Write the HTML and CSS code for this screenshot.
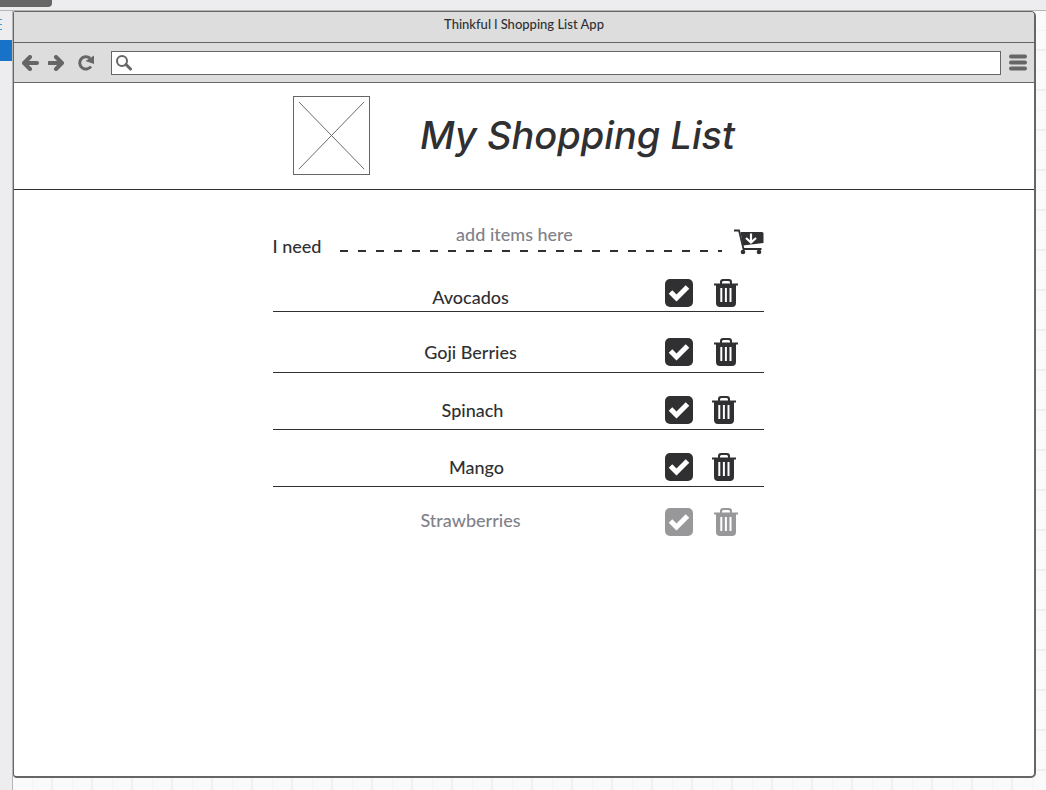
FILE: index.html
```html
<!DOCTYPE html>
<html lang="en">
<head>
<meta charset="utf-8">
<title>Thinkful | Shopping List App</title>
<link rel="stylesheet" href="styles.css">
</head>
<body>
<svg class="sprite" aria-hidden="true">
  <symbol id="check" viewBox="0 0 28 28"><rect width="28" height="28" rx="5" fill="currentColor"/><path d="M5.500 13l6 6L22.500 8" fill="none" stroke="#fff" stroke-width="5" stroke-linejoin="miter"/></symbol>
  <symbol id="trash" viewBox="0 0 24 28"><path fill="currentColor" fill-rule="evenodd" d="M0 4.500h6V3q0-3 3-3h6q3 0 3 3v1.500h6v2h-2V24q0 4-4 4H6q-4 0-4-4V6.500H0zM8 4.500h8V3.500q0-1.500-1.500-1.500h-5Q8 2 8 3.500zM6.300 9v14h2V9zM10.900 9v14h2V9zM15.500 9v14h2V9z"/></symbol>
</svg>
<div class="desk">
  <div class="desk-top"><span class="scroll-thumb"></span></div>
  <div class="desk-side"><span class="side-lines"></span><span class="side-active"></span></div>
  <div class="canvas">
    <div class="window">
      <div class="titlebar">Thinkful l Shopping List App</div>
      <div class="toolbar">
        <button class="nav-button" aria-label="Back"><svg width="18" height="16" viewBox="0 0 18 16"><path d="M15 8H3M8 2L2 8l6 6"/></svg></button>
        <button class="nav-button" aria-label="Forward"><svg width="18" height="16" viewBox="0 0 18 16"><path d="M1 8h12M8 2l6 6-6 6"/></svg></button>
        <button class="nav-button reload" aria-label="Reload"><svg width="18" height="16" viewBox="0 0 18 16"><path class="arc" d="M12 3.200A6.200 6.200 0 1 0 13 11.500"/><path class="tip" d="M16 .5v8.500L7.500 6z"/></svg></button>
        <label class="address">
          <svg width="18" height="16" viewBox="0 0 18 16"><circle cx="6" cy="6" r="5" fill="none" stroke="#666" stroke-width="2"/><path d="M10 9.500l4.500 4.500" stroke="#666" stroke-width="3" stroke-linecap="round"/></svg>
          <input type="text" aria-label="Address">
        </label>
        <button class="nav-button menu" aria-label="Menu"><svg width="18" height="17" viewBox="0 0 18 17"><path d="M2 2.500h14M2 8.500h14M2 14.500h14"/></svg></button>
      </div>
      <header class="page-header">
        <svg class="logo" viewBox="0 0 77 79" role="img" aria-label="Logo"><path d="M5 5l67 69M72 5L5 74" stroke="#666" fill="none"/></svg>
        <h1>My Shopping List</h1>
      </header>
      <main>
        <form class="add-form">
          <label for="item">I need</label>
          <span class="field">
            <input id="item" type="text" placeholder="add items here">
            <svg class="dashes" height="2" aria-hidden="true"><line x1="0" y1="1" x2="100%" y2="1" stroke="#303032" stroke-width="2" stroke-dasharray="8 10"/></svg>
          </span>
          <button type="button" class="cart" aria-label="Add item"><svg width="30" height="26" viewBox="0 0 30 26"><path d="M0 1.500h5l4.500 18.500h18" fill="none" stroke="currentColor" stroke-width="1.800"/><path d="M6.500 3H28q1.500 0 1.500 1.500v9.500L9 16.500z" fill="currentColor"/><path d="M17 4.500v8M12 9l5 4.500L22 9" fill="none" stroke="#fff" stroke-width="2.200"/><circle cx="9" cy="23" r="2.300" fill="currentColor"/><circle cx="25" cy="23" r="2.300" fill="currentColor"/></svg></button>
        </form>
        <ul class="items">
          <li class="low"><span class="name">Avocados</span><label class="tick"><input type="checkbox" aria-label="Avocados bought"><svg><use href="#check"/></svg></label><button class="trash" aria-label="Delete Avocados"><svg><use href="#trash"/></svg></button></li>
          <li class="tall"><span class="name">Goji Berries</span><label class="tick"><input type="checkbox" aria-label="Goji Berries bought"><svg><use href="#check"/></svg></label><button class="trash" aria-label="Delete Goji Berries"><svg><use href="#trash"/></svg></button></li>
          <li class="snug"><span class="name">Spinach</span><label class="tick"><input type="checkbox" aria-label="Spinach bought"><svg><use href="#check"/></svg></label><button class="trash" aria-label="Delete Spinach"><svg><use href="#trash"/></svg></button></li>
          <li class="snug inset"><span class="name">Mango</span><label class="tick"><input type="checkbox" aria-label="Mango bought"><svg><use href="#check"/></svg></label><button class="trash" aria-label="Delete Mango"><svg><use href="#trash"/></svg></button></li>
          <li class="done"><span class="name">Strawberries</span><label class="tick"><input type="checkbox" checked aria-label="Strawberries bought"><svg><use href="#check"/></svg></label><button class="trash" aria-label="Delete Strawberries"><svg><use href="#trash"/></svg></button></li>
        </ul>
      </main>
    </div>
  </div>
</div>
</body>
</html>
```
FILE: styles.css
```css
* { box-sizing: border-box; }
body { margin: 0; font-family: Lato, "Open Sans", sans-serif; font-weight: 500; font-size: 18px; line-height: 24px; color: #303032; }
button { padding: 0; border: 0; background: none; color: inherit; display: flex; }
svg { display: block; }
.sprite { position: absolute; width: 0; height: 0; }

.desk { display: grid; grid-template: 11px 1fr / 13px 1fr; min-height: 100vh; }
.desk-top { grid-column: 1 / 3; background: #ededef; border-bottom: 1px solid #b4b6b4; }
.scroll-thumb { display: block; width: 52px; height: 7px; background: #666; border-radius: 0 0 4px 0; }
.desk-side { background: #ededef; border-right: 1px solid #b4b6b4; }
.side-lines { display: block; width: 2px; height: 29px; background: repeating-linear-gradient(#3e9ad6 0 1px, transparent 1px 5px) 0 8px / 2px 11px no-repeat; }
.side-active { display: block; height: 21px; background: #1872c8; }
.canvas {
  display: flex; padding: 0 10px 12px 0; background-color: #fafafa;
  background-image: linear-gradient(90deg, #f0f0f0 2px, transparent 2px), linear-gradient(#f0f0f0 2px, transparent 2px), linear-gradient(90deg, #f4f4f4 1px, transparent 1px), linear-gradient(#f4f4f4 1px, transparent 1px);
  background-size: 40px 40px, 40px 40px, 40px 40px, 40px 40px;
  background-position: 38px 0, 0 38px, 19px 0, 0 19px;
}

.window { flex: 1; background: #fff; border: 1px solid #666; border-width: 1px 2px 2px 1px; border-radius: 2px 5px 5px 4px; overflow: hidden; }
.titlebar { height: 31px; background: #ddd; border-bottom: 1px solid #666; text-align: center; font-size: 13px; }
.toolbar { display: flex; align-items: center; gap: 8px; height: 40px; padding: 0 8px; background: #ddd; border-bottom: 1px solid #666; }
.nav-button path { fill: none; stroke: #666; stroke-width: 4; stroke-linecap: round; stroke-linejoin: round; }
.nav-button .arc { stroke-width: 3; stroke-linecap: butt; }
.nav-button .tip { fill: #666; stroke: none; }
.reload { margin-left: 4px; }
.address { display: flex; flex: 1; align-items: center; height: 24px; margin-left: 7px; padding: 0 4px; background: #fff; border: 1px solid #666; }
.address input { flex: 1; min-width: 0; border: 0; outline: 0; background: none; font: inherit; }
.menu { margin-right: -1px; }
.menu path { stroke-width: 4; }

.page-header { display: flex; align-items: center; justify-content: center; gap: 50px; padding: 13px 20px 14px 0; border-bottom: 1px solid #303032; }
.logo { width: 77px; height: 79px; border: 1px solid #666; }
h1 { margin: 0; padding-bottom: 2px; font-family: Inter, Lato, sans-serif; font-size: 38px; line-height: 48px; font-weight: 500; font-style: italic; }

main { display: flex; flex-direction: column; align-items: center; padding: 31px 12px 32px 0; }
.add-form { display: flex; align-items: flex-end; width: 491px; max-width: 100%; }
.add-form label { width: 67px; }
.field { display: flex; flex: 1; flex-direction: column; gap: 3px; padding-bottom: 6px; }
.field input { width: 100%; height: 26px; padding: 0 32px 0 0; border: 0; outline: 0; background: none; color: inherit; font: inherit; text-align: center; }
.field input::placeholder { color: #818189; opacity: 1; }
.dashes { width: 100%; }
.cart { margin-left: 12px; padding-bottom: 3px; }

.items { width: 491px; max-width: 100%; margin: 0; padding: 0; list-style: none; }
.items li { display: flex; align-items: center; padding-right: 26px; border-bottom: 1px solid #303032; }
.name { flex: 1; padding-left: 4px; text-align: center; }
.tick { position: relative; display: block; width: 28px; height: 28px; }
.tick svg { width: 28px; height: 28px; }
.tick input { position: absolute; inset: 0; width: 100%; height: 100%; margin: 0; opacity: 0; }
.trash { margin-left: 21px; }
.trash svg { width: 24px; height: 28px; }
.items .low { align-items: flex-end; padding-top: 21px; padding-bottom: 4px; }
.low .name { line-height: 20px; }
.items .tall { padding-top: 26px; padding-bottom: 6px; }
.items .snug { padding-top: 23px; padding-bottom: 5px; padding-right: 28px; }
.snug .name { padding-left: 8px; }
.inset .name { padding-left: 16px; }
.snug .trash { margin-left: 19px; }
.items .done { padding-top: 21px; border: 0; color: #98989b; }
.done .name { padding-bottom: 4px; color: #818189; }
```
